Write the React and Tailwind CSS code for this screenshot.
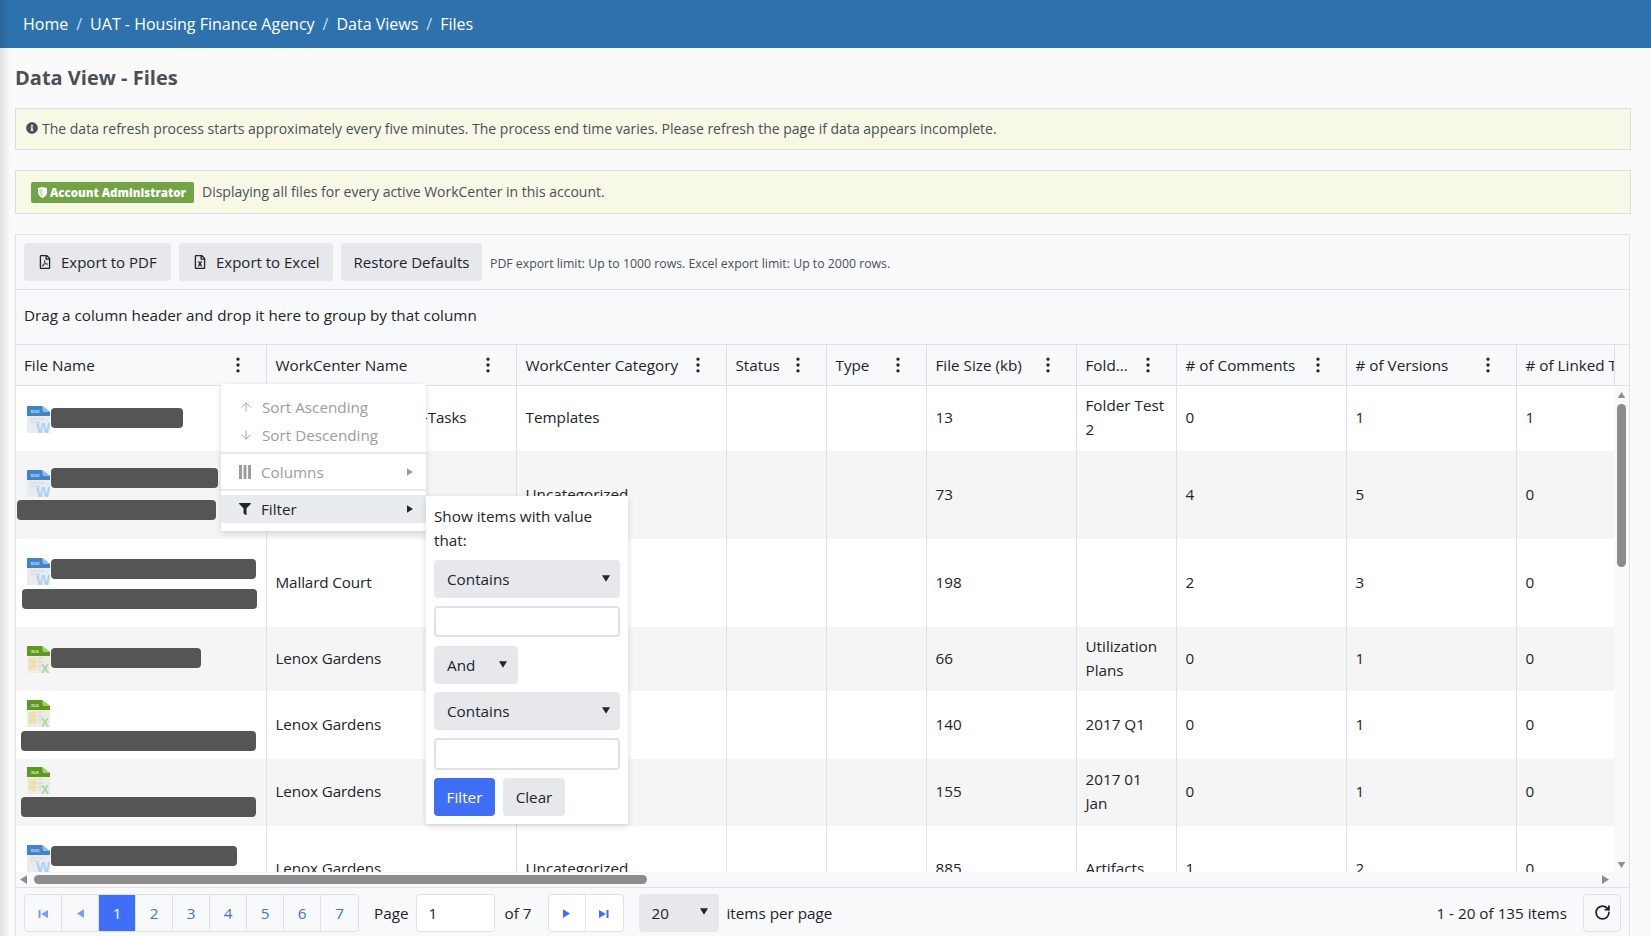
import React from "react";
import { EllipsisVertical, ArrowUp, ArrowDown, RotateCw } from "lucide-react";
import { FaInfoCircle, FaRegFilePdf, FaRegFileExcel, FaFilter } from "react-icons/fa";

const COLUMNS = ["File Name", "WorkCenter Name", "WorkCenter Category", "Status", "Type", "File Size (kb)", "Fold...", "# of Comments", "# of Versions", "# of Linked Tasks"];

const ROWS = [
    { h: "h-[65px]", pt: "pt-[20px]", type: "doc", bar: "mt-[2px] w-[132px]", name: "Multifamily Template-Tasks", cat: "Templates", size: "13", folder: "Folder Test 2", comments: "0", versions: "1", linked: "1" },
    { h: "h-[88px]", pt: "pt-[19px]", type: "doc", bar: "-mt-[2px] w-[167px]", second: "ml-[1px] mt-[3px] w-[199px]", name: "Mallard Court", cat: "Uncategorized", size: "73", folder: "", comments: "4", versions: "5", linked: "0" },
    { h: "h-[88px]", pt: "pt-[19px]", type: "doc", bar: "mt-[1px] w-[205px]", second: "ml-[6px] mt-[4px] w-[235px]", name: "Mallard Court", cat: "Uncategorized", size: "198", folder: "", comments: "2", versions: "3", linked: "0" },
    { h: "h-[64px]", pt: "pt-[19px]", type: "xls", bar: "mt-[2px] w-[150px]", name: "Lenox Gardens", cat: "Uncategorized", size: "66", folder: "Utilization Plans", comments: "0", versions: "1", linked: "0" },
    { h: "h-[68px]", pt: "pt-[9px]", type: "xls", second: "ml-[5px] mt-[4px] w-[235px]", name: "Lenox Gardens", cat: "Uncategorized", size: "140", folder: "2017 Q1", comments: "0", versions: "1", linked: "0" },
    { h: "h-[67px]", pt: "pt-[8px]", type: "xls", second: "ml-[5px] mt-[3px] w-[235px]", name: "Lenox Gardens", cat: "Uncategorized", size: "155", folder: "2017 01\nJan", comments: "0", versions: "1", linked: "0" },
    { h: "h-[86px]", pt: "pt-[19px]", type: "doc", bar: "mt-[1px] w-[186px]", name: "Lenox Gardens", cat: "Uncategorized", size: "885", folder: "Artifacts", comments: "1", versions: "2", linked: "0" },
];

function TableCols() {
    return (
        <colgroup>
            <col className="w-[250px]" />
            <col className="w-[250px]" />
            <col className="w-[210px]" />
            <col className="w-[100px]" />
            <col className="w-[100px]" />
            <col className="w-[150px]" />
            <col className="w-[100px]" />
            <col className="w-[170px]" />
            <col className="w-[170px]" />
            <col className="w-[170px]" />
        </colgroup>
    );
}

function DocIcon() {
    return (
        <svg viewBox="0 0 23 27" className="w-[23px] h-[27px] shrink-0">
            <path d="M0 0H15L23 6V27H0Z" fill="#e9ecef" />
            <path d="M0 0H15L23 6V10H0Z" fill="#3f85cc" />
            <path d="M15 0L23 6H16Z" fill="#8fbce8" />
            <text x="4" y="7" fontSize="4" fontWeight="700" fill="#dcecfa" fontFamily="Liberation Sans, sans-serif">DOC</text>
            <path d="M3 13H17M3 16H13" stroke="#d4d7da" strokeWidth="1" />
            <text x="9" y="27" fontSize="15" fontWeight="700" fill="#a9d2f2" fontFamily="Liberation Sans, sans-serif">W</text>
        </svg>
    );
}

function XlsIcon() {
    return (
        <svg viewBox="0 0 23 27" className="w-[23px] h-[27px] shrink-0">
            <path d="M0 0H15L23 6V27H0Z" fill="#eceee6" />
            <path d="M0 0H15L23 6V10H0Z" fill="#5c9a1f" />
            <path d="M15 0L23 6H16Z" fill="#a4cf6f" />
            <text x="4" y="7" fontSize="4" fontWeight="700" fill="#e6f2d6" fontFamily="Liberation Sans, sans-serif">XLS</text>
            <rect x="2" y="12" width="7" height="12" fill="#f3e3a9" />
            <path d="M9 12H17M9 16H17M9 20H17M13 12V24M2 16H9M2 20H9" stroke="#d4d6cd" strokeWidth="0.8" />
            <text x="14" y="27" fontSize="12" fontWeight="700" fill="#a6d79a" fontFamily="Liberation Sans, sans-serif">X</text>
        </svg>
    );
}

function Redacted({ className }) {
    return <div className={`h-5 bg-[#555] rounded-[4px] ${className}`} />;
}

function FileCell({ row }) {
    return (
        <td className={`align-top ${row.pt}`}>
            <div className="flex items-start ml-[11px]">
                {row.type === "doc" ? <DocIcon /> : <XlsIcon />}
                {row.bar && <Redacted className={`ml-[1px] ${row.bar}`} />}
            </div>
            {row.second && <Redacted className={row.second} />}
        </td>
    );
}

function Triangle({ dir, className }) {
    const points = { up: "0,8 5,0 10,8", down: "0,0 10,0 5,8", left: "8,0 8,10 0,5", right: "0,0 0,10 8,5" };
    const box = dir === "up" || dir === "down" ? "0 0 10 8" : "0 0 8 10";
    return (
        <svg viewBox={box} className={className} fill="currentColor">
            <polygon points={points[dir]} />
        </svg>
    );
}

function EdgeArrow({ flip }) {
    return (
        <svg viewBox="0 0 10 10" className={`w-[10px] h-[10px] ${flip ? "text-[#3e6ff6]" : "rotate-180 text-[#7d9bf5]"}`} fill="currentColor">
            <polygon points="0,1 7,5 0,9" />
            <rect x="7.5" y="1" width="2" height="8" />
        </svg>
    );
}

function PagerButton({ children, active, last }) {
    return (
        <div className={`w-[37px] h-full flex items-center justify-center pt-[2px] ${last ? "" : "border-r border-[#dee2e6]"} ${active ? "bg-[#3e6ff6] text-white" : "text-[#3e6ff6]"}`}>
            {children}
        </div>
    );
}

function FilterSelect({ label, className }) {
    return (
        <div className={`h-[38px] bg-[#e6e8ec] rounded-[4px] flex items-center justify-between pl-[13px] ${className}`}>
            <span>{label}</span>
            <Triangle dir="down" className="w-[8px] h-[7px] text-[#212529] -mt-[2px]" />
        </div>
    );
}

function ColumnMenu() {
    return (
        <div className="absolute left-[221px] top-[384px] w-[205px] h-[147px] bg-white shadow-[0_2px_6px_rgba(0,0,0,0.15)] pt-[9px] z-10">
            <div className="h-[28px] flex items-center pl-[18px] text-[#9a9da1]">
                <ArrowUp size={14} strokeWidth={1.5} />
                <span className="ml-[9px]">Sort Ascending</span>
            </div>
            <div className="h-[28px] flex items-center pl-[18px] text-[#9a9da1]">
                <ArrowDown size={14} strokeWidth={1.5} />
                <span className="ml-[9px]">Sort Descending</span>
            </div>
            <div className="mt-[3px] border-t-2 border-[#e6e8ec] h-[6px]" />
            <div className="h-[28px] flex items-center pl-[18px] pr-[13px] text-[#9a9da1]">
                <svg viewBox="0 0 12 14" className="w-[12px] h-[14px]" fill="currentColor">
                    <rect x="0" y="0" width="3" height="14" />
                    <rect x="4.5" y="0" width="3" height="14" />
                    <rect x="9" y="0" width="3" height="14" />
                </svg>
                <span className="ml-[10px] flex-1">Columns</span>
                <Triangle dir="right" className="w-[6px] h-[8px]" />
            </div>
            <div className="mt-[3px] border-t-2 border-[#e6e8ec] h-[6px]" />
            <div className="h-[28px] flex items-center pl-[18px] pr-[13px] bg-[#e9ecef] text-[#212529]">
                <FaFilter size={12} />
                <span className="ml-[10px] flex-1">Filter</span>
                <Triangle dir="right" className="w-[6px] h-[8px]" />
            </div>

            <div className="absolute left-[205px] top-[112px] w-[202px] h-[328px] bg-white shadow-[0_2px_6px_rgba(0,0,0,0.15)] px-[8px] pt-[8px] text-[#212529]">
                <p className="leading-[24px]">Show items with value that:</p>
                <FilterSelect label="Contains" className="mt-[8px] pr-[10px]" />
                <div className="mt-[8px] h-[31px] border-2 border-[#dee2e6] rounded-[4px] bg-white" />
                <FilterSelect label="And" className="mt-[9px] w-[84px] pr-[11px]" />
                <FilterSelect label="Contains" className="mt-[8px] pr-[10px]" />
                <div className="mt-[8px] h-[32px] border-2 border-[#dee2e6] rounded-[4px] bg-white" />
                <div className="mt-[8px] flex gap-[8px]">
                    <div className="w-[61px] h-[38px] bg-[#3e6ff6] text-white rounded-[4px] flex items-center justify-center">Filter</div>
                    <div className="w-[62px] h-[38px] bg-[#e6e8ec] rounded-[4px] flex items-center justify-center">Clear</div>
                </div>
            </div>
        </div>
    );
}

export default function App() {
    return (
        <div className="relative h-[936px] w-[1651px] overflow-hidden bg-[#fafafa] text-[#212529] text-[15.25px]" style={{ fontFamily: "'Open Sans','Noto Sans',sans-serif" }}>

            {/* Top Bar */}
            <header className="h-12 bg-[#2e72ad] text-white text-[16px] flex items-center gap-[8px] pl-[23px]">
                <span>Home</span>
                <span className="text-[#c9dcec]">/</span>
                <span>UAT - Housing Finance Agency</span>
                <span className="text-[#c9dcec]">/</span>
                <span>Data Views</span>
                <span className="text-[#c9dcec]">/</span>
                <span>Files</span>
            </header>

            {/* sidebar edge shadow */}
            <div className="absolute left-0 top-0 h-full w-[10px] bg-gradient-to-r from-black/10 to-transparent pointer-events-none" />

            <main className="pl-[15px] pr-[20px]">
                <h1 className="h-[60px] flex items-center text-[20px] font-bold text-[#495057]">Data View - Files</h1>

                <div className="h-[42px] bg-[#f7f9e6] border border-[#dcdedb] flex items-center pl-[10px] pb-[2px] text-[#495057] text-[14px]">
                    <FaInfoCircle size={12} className="mr-[4px]" />
                    The data refresh process starts approximately every five minutes. The process end time varies. Please refresh the page if data appears incomplete.
                </div>

                <div className="mt-[20px] h-[44px] bg-[#f7f9e6] border border-[#dcdedb] flex items-center pl-[15px] text-[#495057] text-[14px]">
                    <span className="h-[21px] w-[163px] bg-[#72a345] rounded-[2px] text-white text-[11.5px] font-extrabold flex items-center pl-[7px] pt-[1px] whitespace-nowrap">
                        <svg viewBox="0 0 10 12" className="w-[9px] h-[11px] mr-[3px] shrink-0" fill="currentColor">
                            <path d="M0 1L5 0L10 1V6C10 9 7.5 11 5 12C2.5 11 0 9 0 6Z" />
                            <path d="M5 1.5V10.5C3.5 9.8 1.5 8.3 1.5 6V2.2Z" fill="#72a345" opacity="0.35" />
                        </svg>
                        Account Administrator
                    </span>
                    <span className="ml-[8px] pb-[2px]">Displaying all files for every active WorkCenter in this account.</span>
                </div>

                {/* Grid */}
                <section className="mt-[20px] h-[702px] w-[1615px] bg-[#f8f9fa] border-l border-r border-t border-[#dee2e6] flex flex-col">
                    <div className="h-[55px] shrink-0 border-b border-[#dee2e6] flex items-center pl-[8px]">
                        <button className="h-[38px] w-[147px] bg-[#e6e8ec] rounded-[4px] flex items-center pl-[14px] text-[15px]">
                            <FaRegFilePdf size={14} className="mr-[9px]" />
                            Export to PDF
                        </button>
                        <button className="ml-[8px] h-[38px] w-[154px] bg-[#e6e8ec] rounded-[4px] flex items-center pl-[14px] text-[15px]">
                            <FaRegFileExcel size={14} className="mr-[9px]" />
                            Export to Excel
                        </button>
                        <button className="ml-[8px] h-[38px] w-[141px] bg-[#e6e8ec] rounded-[4px] flex items-center justify-center text-[15px]">Restore Defaults</button>
                        <span className="ml-[8px] pt-[4px] text-[12.3px] text-[#495057]">PDF export limit: Up to 1000 rows. Excel export limit: Up to 2000 rows.</span>
                    </div>

                    <div className="h-[55px] shrink-0 border-b border-[#dee2e6] flex items-center pl-[8px] pb-[4px]">
                        Drag a column header and drop it here to group by that column
                    </div>

                    <div className="h-[41px] shrink-0 border-b border-[#dee2e6] flex">
                        <div className="w-[1598px] overflow-hidden">
                            <table className="table-fixed w-[1670px] border-collapse">
                                <TableCols />
                                <thead>
                                    <tr className="h-[40px]">
                                        {COLUMNS.map((col, i) => (
                                            <th key={col} className={`font-normal text-left whitespace-nowrap pr-[24px] ${i ? "pl-[9px] border-l border-[#dee2e6]" : "pl-[8px]"}`}>
                                                {i === 9 ? col : (
                                                    <div className="flex items-center justify-between">
                                                        <span>{col}</span>
                                                        <EllipsisVertical size={20} className="-mr-[6px]" />
                                                    </div>
                                                )}
                                            </th>
                                        ))}
                                    </tr>
                                </thead>
                            </table>
                        </div>
                        <div className="flex-1 border-l border-[#dee2e6]" />
                    </div>

                    <div className="h-[486px] shrink-0 flex">
                        <div className="w-[1598px] overflow-hidden bg-white">
                            <table className="table-fixed w-[1670px] border-collapse">
                                <TableCols />
                                <tbody>
                                    {ROWS.map((row, i) => (
                                        <tr key={i} className={`${row.h} ${i % 2 ? "bg-[#f5f5f5]" : "bg-white"} [&>td+td]:border-l [&>td+td]:border-[#dee2e6] [&>td+td]:pl-[9px] [&>td+td]:pr-[8px] [&>td+td]:pb-[3px] leading-[24px]`}>
                                            <FileCell row={row} />
                                            <td className="whitespace-nowrap overflow-hidden tracking-[-0.13px]">{row.name}</td>
                                            <td>{row.cat}</td>
                                            <td />
                                            <td />
                                            <td>{row.size}</td>
                                            <td className="whitespace-pre-line">{row.folder}</td>
                                            <td>{row.comments}</td>
                                            <td>{row.versions}</td>
                                            <td>{row.linked}</td>
                                        </tr>
                                    ))}
                                </tbody>
                            </table>
                        </div>
                        <div className="flex-1 flex flex-col items-center text-[#8c8c8c] pt-[6px] pb-[4px]">
                            <Triangle dir="up" className="w-[9px] h-[6px] shrink-0" />
                            <div className="mt-[6px] w-[9px] h-[163px] bg-[#8c8c8c] rounded-full" />
                            <Triangle dir="down" className="w-[9px] h-[6px] shrink-0 mt-auto" />
                        </div>
                    </div>

                    <div className="h-[15px] shrink-0 flex items-center text-[#8c8c8c] pl-[4px] pr-[20px]">
                        <Triangle dir="left" className="w-[7px] h-[9px]" />
                        <div className="ml-[7px] w-[613px] h-[9px] bg-[#8c8c8c] rounded-full" />
                        <Triangle dir="right" className="w-[7px] h-[9px] ml-auto" />
                    </div>

                    {/* Pager */}
                    <div className="h-[50px] shrink-0 border-t border-[#dee2e6] flex items-center pl-[8px] pr-[8px]">
                        <div className="h-[38px] flex border border-[#dee2e6] rounded-[4px]">
                            <PagerButton><EdgeArrow /></PagerButton>
                            <PagerButton><Triangle dir="left" className="w-[7px] h-[9px] text-[#7d9bf5]" /></PagerButton>
                            <PagerButton active>1</PagerButton>
                            <PagerButton>2</PagerButton>
                            <PagerButton>3</PagerButton>
                            <PagerButton>4</PagerButton>
                            <PagerButton>5</PagerButton>
                            <PagerButton>6</PagerButton>
                            <PagerButton last>7</PagerButton>
                        </div>
                        <span className="ml-[15px] pt-[2px]">Page</span>
                        <div className="ml-[7px] w-[79px] h-[38px] bg-white border border-[#dee2e6] rounded-[4px] flex items-center pl-[12px] pt-[2px]">1</div>
                        <span className="ml-[10px] pt-[2px]">of 7</span>
                        <div className="ml-[16px] h-[38px] flex bg-white border border-[#dee2e6] rounded-[4px]">
                            <PagerButton><Triangle dir="right" className="w-[7px] h-[9px]" /></PagerButton>
                            <PagerButton last><EdgeArrow flip /></PagerButton>
                        </div>
                        <div className="ml-[15px] w-[80px] h-[38px] bg-[#e6e8ec] rounded-[4px] flex items-center justify-between pl-[13px] pr-[11px]">
                            <span className="pt-[2px]">20</span>
                            <Triangle dir="down" className="w-[8px] h-[7px] text-[#212529] -mt-[2px]" />
                        </div>
                        <span className="ml-[8px] pt-[2px]">items per page</span>
                        <span className="ml-auto pt-[2px]">1 - 20 of 135 items</span>
                        <div className="ml-[16px] w-[38px] h-[38px] border border-[#dee2e6] rounded-[4px] flex items-center justify-center">
                            <RotateCw size={17} strokeWidth={2.5} />
                        </div>
                    </div>
                </section>
            </main>

            <ColumnMenu />
        </div>
    );
}
